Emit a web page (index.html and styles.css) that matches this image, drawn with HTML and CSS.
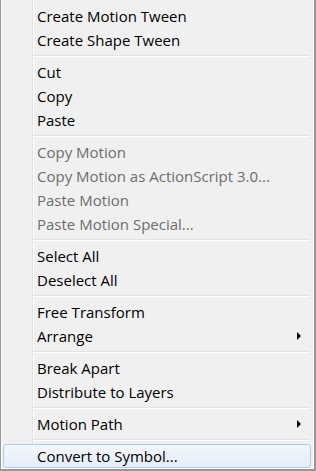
FILE: index.html
```html
<!DOCTYPE html>
<html lang="en">

<head>
    <meta charset="UTF-8">
    <meta name="viewport" content="width=device-width, initial-scale=1.0">
    <title>Context menu</title>
    <link rel="stylesheet" href="styles.css">
</head>

<body>
    <div class="menu">
        <div class="menu-item">Create Motion Tween</div>
        <div class="menu-item">Create Shape Tween</div>
        <div class="menu-sep"></div>
        <div class="menu-item">Cut</div>
        <div class="menu-item">Copy</div>
        <div class="menu-item">Paste</div>
        <div class="menu-sep"></div>
        <div class="menu-item disabled">Copy Motion</div>
        <div class="menu-item disabled">Copy Motion as ActionScript 3.0...</div>
        <div class="menu-item disabled">Paste Motion</div>
        <div class="menu-item disabled">Paste Motion Special...</div>
        <div class="menu-sep"></div>
        <div class="menu-item">Select All</div>
        <div class="menu-item">Deselect All</div>
        <div class="menu-sep"></div>
        <div class="menu-item">Free Transform</div>
        <div class="menu-item sub">Arrange</div>
        <div class="menu-sep"></div>
        <div class="menu-item">Break Apart</div>
        <div class="menu-item">Distribute to Layers</div>
        <div class="menu-sep"></div>
        <div class="menu-item sub">Motion Path</div>
        <div class="menu-sep"></div>
        <div class="menu-item active">Convert to Symbol...</div>
    </div>
</body>

</html>
```

FILE: styles.css
```css
* {
    padding: 0;
    margin: 0;
    box-sizing: border-box;
}

body {
    background: #f0f0f0;
    font-family: "Open Sans", "Noto Sans", sans-serif;
}

.menu {
    width: 316px;
    height: 471px;
    padding: 4px 3px 0 2px;
    display: flex;
    flex-direction: column;
    background-color: #f0f0f0;
    background-image: linear-gradient(to right, transparent 31px, #e2e3e3 31px, #e2e3e3 32px, #ffffff 32px, #ffffff 33px, transparent 33px);
    border-left: 1px solid #979797;
    border-right: 2px solid #979797;
    border-bottom: 2px solid #979797;
    box-shadow: inset 1px 0 0 #ffffff, inset -1px -1px 0 #ffffff;
}

.menu-item {
    position: relative;
    height: 24px;
    line-height: 22px;
    padding-left: 33px;
    font-size: 15px;
    color: #000;
    border: 1px solid transparent;
    border-radius: 3px;
    white-space: nowrap;
}

.menu-item.disabled {
    color: #6d6d6d;
}

.menu-item.sub::after {
    content: "";
    position: absolute;
    right: 9px;
    top: 7px;
    border-left: 4px solid #000;
    border-top: 4px solid transparent;
    border-bottom: 4px solid transparent;
}

.menu-item.active {
    border-color: #aeccf1;
    background: linear-gradient(#f3f7fd, #e4edf9);
}

.menu-sep {
    height: 8px;
    margin-left: 30px;
    margin-right: 2px;
    background: linear-gradient(transparent 3px, #e3e3e3 3px, #e3e3e3 4px, #ffffff 4px, #ffffff 5px, transparent 5px);
}
```
